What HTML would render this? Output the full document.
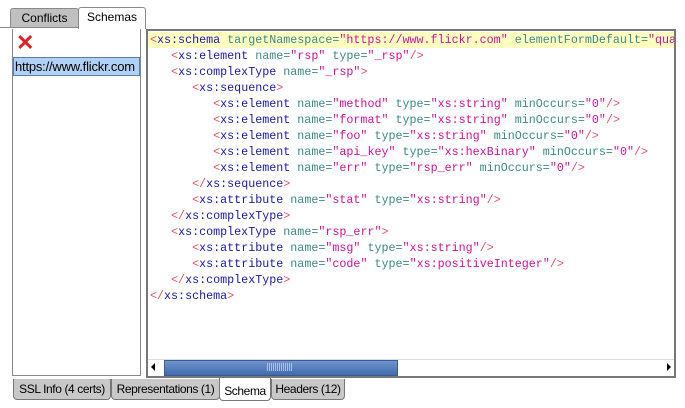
<!DOCTYPE html><html><head><style>
body{margin:0;width:685px;height:408px;background:#fff;position:relative;overflow:hidden;font-family:"Liberation Sans",sans-serif;font-size:12px}
.a{position:absolute}
.tab{position:absolute;border:1px solid #8a8a8a;border-bottom:none;border-radius:3px 3px 0 0;text-align:center;line-height:18px}
.code{position:absolute;left:150px;top:32px;font-family:"Liberation Mono",monospace;font-size:11.7px;line-height:16px;color:#3a8a8a}
.code div{height:16px;white-space:pre}
.b{color:#e0506a}.e{color:#1818b0}.v{color:#d0109a}
.bt{position:absolute;top:379px;height:20px;border:1px solid #777;border-top:none;border-radius:0 0 4px 4px;background:#c8c8c8;font-size:12px;line-height:20px;text-align:center;letter-spacing:-0.4px;white-space:nowrap;overflow:hidden}
</style></head><body>
<div class="tab" style="left:10px;top:8px;width:67px;height:19px;background:#c0c0c0">Conflicts</div>
<div class="tab" style="left:78px;top:7px;width:66px;height:21px;background:#fff">Schemas</div>
<div class="a" style="left:0;top:27px;width:78px;height:1px;background:#8a8a8a"></div>
<div class="a" style="left:12px;top:29px;width:127px;height:346px;border:1px solid #888;border-top:none"></div>
<div class="a" style="left:16px;top:33px;font-size:22px;font-weight:bold;color:#e02020;line-height:20px">✕</div>
<div class="a" style="left:13px;top:57px;width:124px;height:17px;background:#b0d0f4;border:1px solid #5b7bb4;font-size:13px;line-height:17px;padding-left:1px;white-space:nowrap;overflow:hidden;letter-spacing:-0.2px">https://www.flickr.com</div>
<div class="a" style="left:146px;top:29px;width:526px;height:345px;border:2px solid #777;overflow:hidden">
<div class="a" style="left:0;top:1px;width:526px;height:16px;background:#ffffc0"></div>
<div class="code" style="left:2px;top:1px">
<div><span class="b">&lt;</span><span class="e">xs:schema</span> targetNamespace=<span class="v">"https://www.flickr.com"</span> elementFormDefault=<span class="v">"qua</span></div>
<div>   <span class="b">&lt;</span><span class="e">xs:element</span> name=<span class="v">"rsp"</span> type=<span class="v">"_rsp"</span><span class="b">/&gt;</span></div>
<div>   <span class="b">&lt;</span><span class="e">xs:complexType</span> name=<span class="v">"_rsp"</span><span class="b">&gt;</span></div>
<div>      <span class="b">&lt;</span><span class="e">xs:sequence</span><span class="b">&gt;</span></div>
<div>         <span class="b">&lt;</span><span class="e">xs:element</span> name=<span class="v">"method"</span> type=<span class="v">"xs:string"</span> minOccurs=<span class="v">"0"</span><span class="b">/&gt;</span></div>
<div>         <span class="b">&lt;</span><span class="e">xs:element</span> name=<span class="v">"format"</span> type=<span class="v">"xs:string"</span> minOccurs=<span class="v">"0"</span><span class="b">/&gt;</span></div>
<div>         <span class="b">&lt;</span><span class="e">xs:element</span> name=<span class="v">"foo"</span> type=<span class="v">"xs:string"</span> minOccurs=<span class="v">"0"</span><span class="b">/&gt;</span></div>
<div>         <span class="b">&lt;</span><span class="e">xs:element</span> name=<span class="v">"api_key"</span> type=<span class="v">"xs:hexBinary"</span> minOccurs=<span class="v">"0"</span><span class="b">/&gt;</span></div>
<div>         <span class="b">&lt;</span><span class="e">xs:element</span> name=<span class="v">"err"</span> type=<span class="v">"rsp_err"</span> minOccurs=<span class="v">"0"</span><span class="b">/&gt;</span></div>
<div>      <span class="b">&lt;/</span><span class="e">xs:sequence</span><span class="b">&gt;</span></div>
<div>      <span class="b">&lt;</span><span class="e">xs:attribute</span> name=<span class="v">"stat"</span> type=<span class="v">"xs:string"</span><span class="b">/&gt;</span></div>
<div>   <span class="b">&lt;/</span><span class="e">xs:complexType</span><span class="b">&gt;</span></div>
<div>   <span class="b">&lt;</span><span class="e">xs:complexType</span> name=<span class="v">"rsp_err"</span><span class="b">&gt;</span></div>
<div>      <span class="b">&lt;</span><span class="e">xs:attribute</span> name=<span class="v">"msg"</span> type=<span class="v">"xs:string"</span><span class="b">/&gt;</span></div>
<div>      <span class="b">&lt;</span><span class="e">xs:attribute</span> name=<span class="v">"code"</span> type=<span class="v">"xs:positiveInteger"</span><span class="b">/&gt;</span></div>
<div>   <span class="b">&lt;/</span><span class="e">xs:complexType</span><span class="b">&gt;</span></div>
<div><span class="b">&lt;/</span><span class="e">xs:schema</span><span class="b">&gt;</span></div>
</div>
<div class="a" style="left:0;top:328px;width:526px;height:17px;background:#fff;border-top:1px solid #ddd"></div>
<div class="a" style="left:3px;top:332px;width:0;height:0;border:4px solid transparent;border-right:4px solid #000;border-left:none"></div>
<div class="a" style="left:16px;top:329px;width:232px;height:14px;background:linear-gradient(#6f95cc,#3f6aae);border:1px solid #3a5a90"></div>
<div class="a" style="left:119px;top:332px;width:26px;height:8px;background:repeating-linear-gradient(90deg,#a8c0e8 0 1px,transparent 1px 2px)"></div>
<div class="a" style="left:519px;top:332px;width:0;height:0;border:4px solid transparent;border-left:4px solid #000;border-right:none"></div>
</div>
<div class="bt" style="left:13px;width:96px">SSL Info (4 certs)</div>
<div class="bt" style="left:111px;width:107px">Representations (1)</div>
<div class="bt" style="left:219px;top:378px;width:50px;height:22px;background:#fff;line-height:26px">Schema</div>
<div class="bt" style="left:271px;width:72px">Headers (12)</div>
</body></html>
